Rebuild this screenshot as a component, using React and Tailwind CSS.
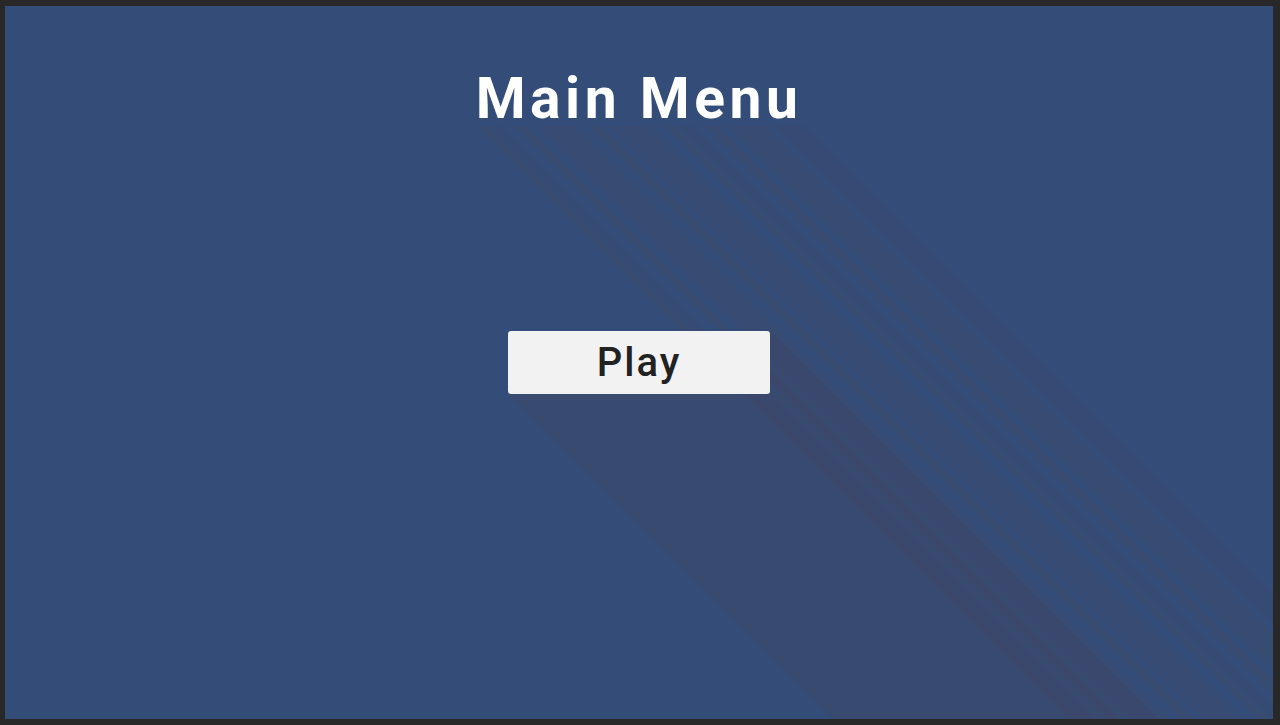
import React from 'react';

// streak bands cast by the title glyphs (panel coords, x range at y = 120)
const titleBands = [
  [472, 484, 0.22], [486, 498, 0.12], [510, 522, 0.22],
  [534, 570, 0.16], [584, 596, 0.22], [606, 644, 0.18],
  [660, 672, 0.22], [674, 690, 0.12], [700, 714, 0.22],
  [724, 760, 0.16], [768, 800, 0.2],
];

const Streaks = () => {
  const L = 1400;
  return (
    <svg className="pointer-events-none absolute inset-0 h-full w-full" viewBox="0 0 1268 713" preserveAspectRatio="none">
      {titleBands.map(([a, b, o], i) => (
        <polygon
          key={i}
          points={`${a},120 ${b},120 ${b + L},${120 + L} ${a + L},${120 + L}`}
          fill="#48435d"
          opacity={o}
        />
      ))}
      {/* button shadow */}
      <polygon
        points={`765,325 ${765 + L},${325 + L} ${503 + L},${388 + L} 503,388`}
        fill="#48435d"
        opacity="0.26"
      />
    </svg>
  );
};

export default function App() {
  return (
    <div className="h-screen w-full bg-[#282828] pt-[6px] pl-[5px] pr-[7px] pb-[6px]">
      <div className="relative flex h-full w-full flex-col items-center overflow-hidden bg-[#344d78]">
        <Streaks />
        <h1
          className="relative mt-[64px] text-[57px] font-bold leading-none tracking-[4.5px] text-white"
          style={{ fontFamily: 'Roboto, "Open Sans", sans-serif' }}
        >
          Main Menu
        </h1>
        <button
          className="relative mt-[204px] flex h-[63px] w-[262px] items-center justify-center rounded-[3px] bg-[#f2f2f2] text-[40px] font-medium tracking-[2px] text-[#222222]"
          style={{ fontFamily: 'Roboto, "Open Sans", sans-serif' }}
        >
          Play
        </button>
      </div>
    </div>
  );
}
